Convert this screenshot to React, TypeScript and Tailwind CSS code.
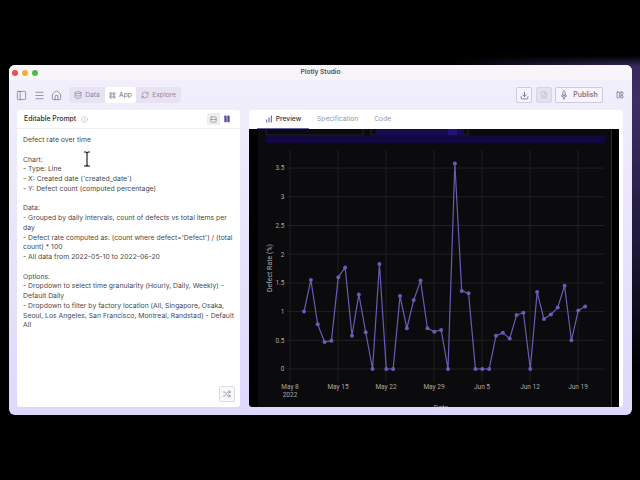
import {
  ChartNoAxesColumnIncreasing,
  Database,
  Download,
  FileDown,
  House,
  Info,
  LayoutGrid,
  LayoutPanelLeft,
  Menu,
  PanelLeft,
  Pause,
  RefreshCw,
  Rocket,
  Rows2,
  Shuffle,
} from "lucide-react"

const promptText = `Defect rate over time

Chart:
- Type: Line
- X: Created date (\`created_date\`)
- Y: Defect count (computed percentage)

Data:
- Grouped by daily intervals, count of defects vs total items per day
- Defect rate computed as: (count where defect='Defect') / (total count) * 100
- All data from 2022-05-10 to 2022-06-20

Options:
- Dropdown to select time granularity (Hourly, Daily, Weekly) - Default Daily
- Dropdown to filter by factory location (All, Singapore, Osaka, Seoul, Los Angeles, San Francisco, Montreal, Randstad) - Default All`

const values = [
  1.0, 1.55, 0.78, 0.47, 0.49, 1.6, 1.77, 0.58, 1.3, 0.64, 0, 1.83, 0, 0, 1.27, 0.71, 1.2, 1.54, 0.71, 0.65, 0.68, 0,
  3.58, 1.36, 1.32, 0, 0, 0, 0.58, 0.63, 0.53, 0.94, 0.98, 0, 1.34, 0.87, 0.95, 1.07, 1.45, 0.5, 1.02, 1.09,
]

const yTicks = [
  { label: "0", value: 0 },
  { label: "0.5", value: 0.5 },
  { label: "1", value: 1 },
  { label: "1.5", value: 1.5 },
  { label: "2", value: 2 },
  { label: "2.5", value: 2.5 },
  { label: "3", value: 3 },
  { label: "3.5", value: 3.5 },
]

const xTicks = ["May 8", "May 15", "May 22", "May 29", "Jun 5", "Jun 12", "Jun 19"]

const xPos = (i: number) => 304 + i * 6.857
const yPos = (v: number) => 369 - v * 57.4

function DefectChart() {
  const points = values.map((v, i) => `${xPos(i)},${yPos(v)}`).join(" ")

  return (
    <svg viewBox="249 129 370 278" className="block h-[278px] w-[370px] font-['Roboto']">
      <rect x="249" y="129" width="370" height="278" fill="#000" />
      <rect x="258" y="129" width="353" height="278" fill="#0b0b0d" />
      <rect x="611" y="129" width="1" height="278" fill="#2a2a38" />

      {/* dropdowns cut off by the scroll */}
      <path d="M266 129V135H363V129M371 129V135H468V129" fill="none" stroke="#2c2c30" strokeWidth="0.8" />
      <rect x="376" y="129" width="88" height="6" fill="#170b52" />
      <rect x="448" y="129" width="9" height="6" fill="#24127a" />
      <rect x="266" y="135.5" width="339" height="7.5" fill="#12083f" />

      {yTicks.map((t) => (
        <g key={t.label}>
          <line x1="287" x2="604" y1={yPos(t.value)} y2={yPos(t.value)} stroke="#262626" strokeWidth="0.8" />
          <text x="284.5" y={yPos(t.value) + 2.3} textAnchor="end" fontSize="6.5" fill="#a8a8a8">
            {t.label}
          </text>
        </g>
      ))}
      {xTicks.map((t, i) => (
        <g key={t}>
          <line x1={290 + i * 48} x2={290 + i * 48} y1="150" y2="382" stroke="#262626" strokeWidth="0.8" />
          <text x={290 + i * 48} y="389" textAnchor="middle" fontSize="6.5" fill="#a8a8a8">
            {t}
          </text>
        </g>
      ))}
      <text x="290" y="397" textAnchor="middle" fontSize="6.5" fill="#a8a8a8">
        2022
      </text>
      <text x="441" y="409.5" textAnchor="middle" fontSize="7" fill="#a8a8a8">
        Date
      </text>
      <text transform="translate(271.5 268) rotate(-90)" textAnchor="middle" fontSize="7" fill="#a8a8a8">
        Defect Rate (%)
      </text>

      <polyline points={points} fill="none" stroke="#675db5" strokeWidth="1.2" strokeLinejoin="round" />
      {values.map((v, i) => (
        <circle key={i} cx={xPos(i)} cy={yPos(v)} r="2" fill="#675db8" />
      ))}
    </svg>
  )
}

function TextCursor() {
  return (
    <svg viewBox="0 0 10 16" className="absolute left-[82px] top-[151px] h-[16px] w-[10px]">
      <path
        d="M2 1H3.5C4.3 1 5 1.6 5 2.5V13.5C5 14.4 4.3 15 3.5 15H2M8 1H6.5C5.7 1 5 1.6 5 2.5M8 15H6.5C5.7 15 5 14.4 5 13.5"
        fill="none"
        stroke="#fff"
        strokeWidth="2.2"
      />
      <path
        d="M2 1H3.5C4.3 1 5 1.6 5 2.5V13.5C5 14.4 4.3 15 3.5 15H2M8 1H6.5C5.7 1 5 1.6 5 2.5M8 15H6.5C5.7 15 5 14.4 5 13.5"
        fill="none"
        stroke="#111"
        strokeWidth="1.1"
      />
    </svg>
  )
}

export default function App() {
  return (
    <div className="relative h-[480px] w-[640px] overflow-hidden bg-[linear-gradient(to_bottom,#000_56px,transparent_66px),radial-gradient(ellipse_190px_270px_at_100%_100px,#3f2e66_0%,#1d1838_55%,#000_100%)] pl-[9px] pt-[65px] font-['Inter',sans-serif]">
      <div className="flex h-[350px] w-[623px] flex-col overflow-hidden rounded-[6px] bg-gradient-to-b from-[#f3f0fb] to-[#dfd8fb]">
        {/* title bar */}
        <div className="relative flex h-[15px] shrink-0 items-center justify-center bg-[#f7f5fa]">
          <div className="absolute left-[3px] flex gap-[4px]">
            <span className="h-[6px] w-[6px] rounded-full bg-[#e5504a]" />
            <span className="h-[6px] w-[6px] rounded-full bg-[#f0b13c]" />
            <span className="h-[6px] w-[6px] rounded-full bg-[#4fb952]" />
          </div>
          <span className="text-[6.6px] font-semibold leading-none text-[#555]">Plotly Studio</span>
        </div>

        {/* toolbar */}
        <div className="flex h-[30px] shrink-0 items-center pl-[7px] pr-[8px]">
          <PanelLeft className="h-[11px] w-[11px] text-[#6f6c85]" strokeWidth={1.5} />
          <Menu className="ml-[7px] h-[11px] w-[11px] text-[#6f6c85]" strokeWidth={1.5} />
          <House className="ml-[6px] h-[11px] w-[11px] text-[#6f6c85]" strokeWidth={1.5} />
          <div className="ml-[7px] flex h-[16px] w-[112px] items-center rounded-[3px] bg-[#e7e3f3] text-[6.7px] text-[#8b88a0]">
            <div className="flex w-[36px] items-center justify-center gap-[3px]">
              <Database className="h-[8px] w-[8px]" />
              <span>Data</span>
            </div>
            <div className="flex h-[16px] w-[31px] items-center justify-center gap-[3px] rounded-[2px] bg-white text-[#6d6a8c]">
              <LayoutGrid className="h-[7px] w-[7px]" />
              <span>App</span>
            </div>
            <div className="flex flex-1 items-center justify-center gap-[3px]">
              <RefreshCw className="h-[8px] w-[8px]" />
              <span>Explore</span>
            </div>
          </div>
          <div className="ml-auto flex items-center">
            <button className="flex h-[16px] w-[16px] items-center justify-center rounded-[2px] border border-[#cfcae0] bg-[#f6f4fc]">
              <Download className="h-[9px] w-[9px] text-[#5f5a80]" />
            </button>
            <button className="ml-[4px] flex h-[16px] w-[16px] items-center justify-center rounded-[2px] border border-[#d8d4e4] bg-[#e4e1ee]">
              <FileDown className="h-[8px] w-[8px] text-[#bdb9cc]" />
            </button>
            <button className="ml-[3px] flex h-[16px] w-[48px] items-center justify-center gap-[5px] rounded-[2px] border border-[#cfcae0] bg-[#f6f4fc] text-[7px] font-medium text-[#6d6a8c]">
              <Rocket className="h-[8px] w-[8px] -rotate-45" />
              <span>Publish</span>
            </button>
            <LayoutPanelLeft className="ml-[13px] h-[8px] w-[8px] text-[#6f6c85]" />
          </div>
        </div>

        {/* panels */}
        <div className="flex min-h-0 flex-1 gap-[9px] pb-[8px] pl-[8px] pr-[9px]">
          <div className="flex w-[223px] flex-col overflow-hidden rounded-[3px] bg-white">
            <div className="flex h-[19px] shrink-0 items-center border-b border-[#efedf5] pl-[7px] pr-[7px]">
              <span className="text-[6.9px] font-medium text-[#333]">Editable Prompt</span>
              <Info className="ml-[5px] h-[7px] w-[7px] text-[#b5b5bd]" />
              <div className="ml-auto flex h-[12px] w-[26px] items-center rounded-[2px] bg-[#eeeeef]">
                <div className="flex w-[13px] justify-center">
                  <Rows2 className="h-[7px] w-[7px] text-[#77778a]" />
                </div>
                <div className="flex h-[12px] w-[13px] items-center justify-center rounded-[2px] bg-white">
                  <Pause className="h-[8px] w-[8px] fill-current text-[#55509a]" />
                </div>
              </div>
            </div>
            <div className="flex min-h-0 flex-1 flex-col pl-[6px] pr-[5px] pt-[6px]">
              <p className="whitespace-pre-wrap text-[6.85px] leading-[9.75px] text-[#4a4a4a]">{promptText}</p>
              <button className="mb-[5px] mt-auto flex h-[16px] w-[16px] items-center justify-center self-end rounded-[2px] border border-[#dcdbe6] bg-[#f8f8fb]">
                <Shuffle className="h-[8px] w-[8px] text-[#6f6c85]" />
              </button>
            </div>
          </div>

          <div className="flex w-[374px] flex-col overflow-hidden rounded-[3px] bg-white">
            <div className="flex h-[19px] shrink-0 items-center pl-[8px] text-[6.7px] text-[#9a9aa2]">
              <div className="flex h-[19px] w-[52px] items-center justify-center gap-[3px] border-b border-[#6a64a8] font-medium text-[#333]">
                <ChartNoAxesColumnIncreasing className="h-[8px] w-[8px] text-[#55509a]" strokeWidth={3} />
                <span>Preview</span>
              </div>
              <span className="ml-[8px]">Specification</span>
              <span className="ml-[16px]">Code</span>
            </div>
            <div className="min-h-0 flex-1 overflow-hidden">
              <DefectChart />
            </div>
          </div>
        </div>
      </div>
      <TextCursor />
    </div>
  )
}
